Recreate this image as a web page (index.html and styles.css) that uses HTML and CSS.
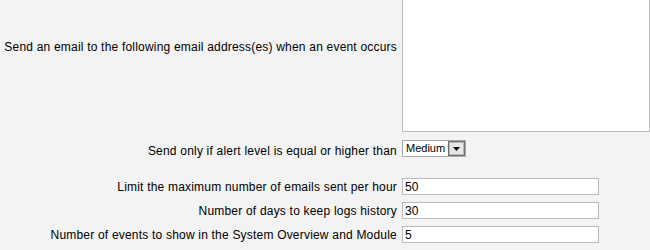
FILE: index.html
```html
<!DOCTYPE html>
<html lang="en">
<head>
  <meta charset="UTF-8">
  <meta name="viewport" content="width=device-width, initial-scale=1.0">
  <title>Alert Settings</title>
  <link rel="stylesheet" href="styles.css">
</head>
<body>
  <form class="settings">
    <div class="row row-emails">
      <label class="label" for="emails">Send an email to the following email address(es) when an event occurs</label>
      <textarea id="emails" class="emails"></textarea>
    </div>

    <div class="row row-level">
      <label class="label" for="level">Send only if alert level is equal or higher than</label>
      <div class="dropdown">
        <select id="level" class="dropdown-value">
          <option>Medium</option>
        </select>
        <span class="dropdown-button">
          <svg width="7" height="4" viewBox="0 0 7 4"><path d="M0 0h7L3.5 4z" fill="#000"/></svg>
        </span>
      </div>
    </div>

    <div class="row row-field">
      <label class="label" for="max-emails">Limit the maximum number of emails sent per hour</label>
      <input id="max-emails" class="field" type="text" value="50">
    </div>
    <div class="row row-field">
      <label class="label" for="log-days">Number of days to keep logs history</label>
      <input id="log-days" class="field" type="text" value="30">
    </div>
    <div class="row row-field">
      <label class="label" for="event-count">Number of events to show in the System Overview and Module</label>
      <input id="event-count" class="field" type="text" value="5">
    </div>
  </form>
</body>
</html>
```

FILE: styles.css
```css
/* General Styles */
html, body {
  margin: 0;
  padding: 0;
  overflow: hidden;
  background-color: #f3f3f3;
}

body {
  font-family: 'Liberation Sans', Arial, sans-serif;
  font-size: 12px;
  letter-spacing: 0.2px;
  color: #000;
}

.settings {
  margin-top: -39px;
}

.row {
  display: flex;
  align-items: center;
  gap: 5px;
}

.label {
  width: 397px;
  flex-shrink: 0;
  text-align: right;
}

/* Email list */
.emails {
  display: block;
  box-sizing: border-box;
  width: 300px;
  height: 171px;
  margin: 0;
  padding: 2px;
  border: 1px solid #bdbdbd;
  background: #fff;
  resize: none;
}

/* Alert level */
.row-level {
  margin-top: 8px;
  align-items: flex-end;
}

.row-level .label {
  position: relative;
  top: 1px;
}

.dropdown {
  display: flex;
  box-sizing: border-box;
  width: 64px;
  height: 17px;
  border: 1px solid #a9a9a9;
  background: #fff;
}

.dropdown-value {
  flex: 1;
  min-width: 0;
  margin: 0;
  padding: 0 0 0 3px;
  border: none;
  background: transparent;
  font-family: inherit;
  font-size: 11px;
  letter-spacing: 0;
  color: #000;
  line-height: 15px;
  appearance: none;
  -webkit-appearance: none;
}

.dropdown-button {
  display: flex;
  align-items: center;
  justify-content: center;
  box-sizing: border-box;
  width: 17px;
  border: 1px solid #707070;
  box-shadow: inset 0 0 0 1px #b8b8b8;
  background: #e6e6e6;
}

/* Number fields */
.row-field {
  margin-top: 7px;
}

.row-level + .row-field {
  margin-top: 21px;
}

.field {
  box-sizing: border-box;
  width: 197px;
  height: 17px;
  margin: 0;
  padding: 0 2px;
  border: 1px solid #bdbdbd;
  background: #fff;
  font-family: inherit;
  font-size: 12px;
  color: #000;
}
```
